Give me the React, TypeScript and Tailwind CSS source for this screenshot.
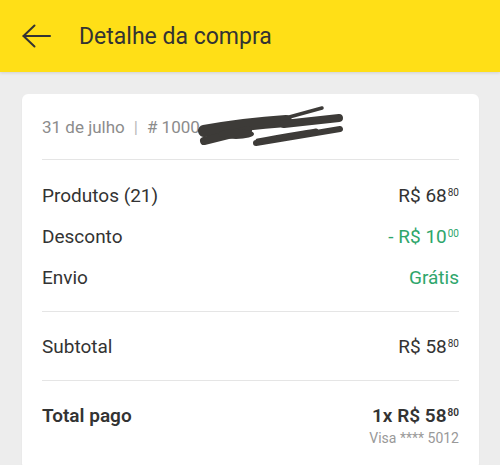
function Price({ whole, cents, className = "" }: { whole: string; cents: string; className?: string }) {
  return (
    <span className={`inline-flex items-start ${className}`}>
      <span>{whole}</span>
      <span className="text-[10px] leading-none mt-[3px] ml-[1px]">{cents}</span>
    </span>
  );
}

function Row({ label, children, bold = false }: { label: string; children: React.ReactNode; bold?: boolean }) {
  return (
    <div className="flex justify-between items-start">
      <span className={`text-[19px] leading-[22px] text-[#333] ${bold ? "font-semibold" : ""}`}>{label}</span>
      {children}
    </div>
  );
}

export default function App() {
  return (
    <div className="w-[500px] h-[465px] overflow-hidden bg-[#ededed]" style={{ fontFamily: "Roboto, 'Open Sans', sans-serif" }}>
      {/* Header */}
      <header className="h-[72px] bg-[#ffdf17] flex items-center pl-[22px] gap-[28px] shadow-[0_1px_3px_rgba(0,0,0,0.12)] relative z-10">
        <svg width="29" height="24" viewBox="0 0 29 24" fill="none" stroke="#333" strokeWidth="2" strokeLinecap="round" strokeLinejoin="round">
          <path d="M1.5 12 H28" />
          <path d="M12.5 1.5 L1.5 12 L12.5 22.5" />
        </svg>
        <h1 className="text-[23px] text-[#333] mt-[2px]">Detalhe da compra</h1>
      </header>

      <main className="pt-[22px] pl-[22px] pr-[21px]">
        <div className="bg-white rounded-[6px] px-[20px] pt-[19px] pb-[20px] shadow-[0_1px_2px_rgba(0,0,0,0.06)]">
          {/* Date / order */}
          <div className="h-[30px] flex items-center text-[17px] text-[#8c8c8c]">
            <span>31 de julho</span>
            <span className="mx-[9px] text-[#bbb]">|</span>
            <span># 1000</span>
            <span className="relative inline-block w-0 h-[30px]">
              <svg className="absolute left-[-4px] top-[-13px]" width="150" height="50" viewBox="0 0 150 50" fill="none">
                <g stroke="#3d3b38" strokeLinecap="round" strokeLinejoin="round">
                  <path d="M8 31 C30 27 60 23 90 21" strokeWidth="12" />
                  <path d="M8 41 L52 30" strokeWidth="8" />
                  <path d="M86 19 L126 8" strokeWidth="3.5" />
                  <path d="M88 24 L143 18" strokeWidth="8" />
                  <path d="M60 43 C90 38 120 33 144 29" strokeWidth="6" />
                  <path d="M62 41 C82 37 102 34 120 31" strokeWidth="5" />
                </g>
                <g fill="#3d3b38">
                  <ellipse cx="40" cy="34" rx="18" ry="5" />
                </g>
              </svg>
            </span>
          </div>
          <div className="h-px bg-[#e5e5e5] mt-[16px]" />

          <div className="flex flex-col gap-[19px] pt-[25px] pb-[22px]">
            <Row label="Produtos (21)">
              <Price whole="R$ 68" cents="80" className="text-[19px] leading-[22px] text-[#333]" />
            </Row>
            <Row label="Desconto">
              <Price whole="- R$ 10" cents="00" className="text-[19px] leading-[22px] text-[#2ea66b]" />
            </Row>
            <Row label="Envio">
              <span className="text-[19px] leading-[22px] text-[#2ea66b]">Grátis</span>
            </Row>
          </div>
          <div className="h-px bg-[#e5e5e5]" />

          <div className="pt-[24px] pb-[22px]">
            <Row label="Subtotal">
              <Price whole="R$ 58" cents="80" className="text-[19px] leading-[22px] text-[#333]" />
            </Row>
          </div>
          <div className="h-px bg-[#e5e5e5]" />

          <div className="pt-[24px]">
            <Row label="Total pago" bold>
              <div className="flex flex-col items-end">
                <Price whole="1x R$ 58" cents="80" className="text-[19px] leading-[22px] text-[#333] font-semibold" />
                <span className="text-[14px] text-[#999] mt-[1px]">Visa **** 5012</span>
              </div>
            </Row>
          </div>
        </div>
      </main>
    </div>
  );
}
